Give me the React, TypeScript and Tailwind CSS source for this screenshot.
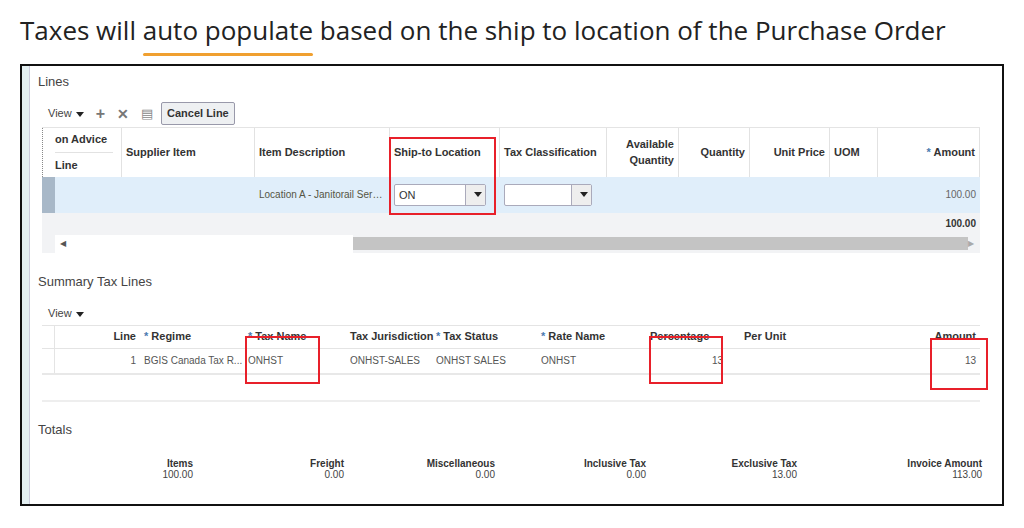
import React from "react";

const H = "font-bold text-[#333] text-[11px]";
const Tri = () => <span className="inline-block ml-1 align-middle w-0 h-0 border-l-[4px] border-r-[4px] border-t-[5px] border-l-transparent border-r-transparent border-t-[#222]" />;

function Select({ value, w }: { value: string; w: string }) {
  return (
    <div className={`flex h-[22px] border border-[#aab] rounded-[2px] bg-white ${w}`}>
      <div className="flex-1 px-1 text-[11px] text-[#333] leading-[20px]">{value}</div>
      <div className="w-[20px] border-l border-[#aab] bg-[#eee] flex items-center justify-center"><Tri /></div>
    </div>
  );
}

export default function App() {
  const lineCols: [string, number, string][] = [
    ["", 67, ""], ["Supplier Item", 133, ""], ["Item Description", 135, ""], ["Ship-to Location", 110, ""],
    ["Tax Classification", 107, ""], ["Available Quantity", 72, "r"], ["Quantity", 71, "r"], ["Unit Price", 80, "r"], ["UOM", 48, ""], ["* Amount", 102, "r"],
  ];
  const totals = [["Items", "100.00"], ["Freight", "0.00"], ["Miscellaneous", "0.00"], ["Inclusive Tax", "0.00"], ["Exclusive Tax", "13.00"], ["Invoice Amount", "113.00"]];
  return (
    <div className="w-[1024px] h-[528px] bg-white relative overflow-hidden" style={{ fontFamily: "'Liberation Sans', Arial, sans-serif" }}>
      <div className="pt-[13px] pl-[20px] text-[26px] text-[#222] leading-[34px]" style={{ fontFamily: "'Open Sans', sans-serif" }}>
        Taxes will <span className="relative">auto populate<span className="absolute left-0 right-0 bottom-[-8px] h-[3px] rounded bg-[#f0a030]" /></span> based on the ship to location of the Purchase Order
      </div>
      <div className="absolute left-[20px] top-[64px] w-[984px] h-[442px] border-2 border-[#111] bg-white flex">
        <div className="w-[8px] bg-[#e4f0f2] border-r border-[#ccd]" />
        <div className="flex-1 pl-[8px] pr-[14px] relative">
          <div className="text-[13px] text-[#444] mt-[6px]">Lines</div>
          <div className="flex items-center gap-3 mt-[11px] ml-[10px] text-[11px] text-[#444] h-[22px]">
            <span>View<Tri /></span>
            <span className="text-[#777] text-[16px] font-bold leading-none">+</span>
            <span className="text-[#777] text-[14px] font-bold leading-none">✕</span>
            <span className="text-[#888] text-[13px] leading-none">▤</span>
            <span className="border border-[#99a] rounded-[2px] bg-[#eef0f2] px-[5px] py-[2px] font-bold text-[#333] -ml-1">Cancel Line</span>
          </div>
          <div className="mt-[2px] ml-[4px] w-[938px]">
            <div className="flex h-[50px] border-t border-[#e4e4e4]">
              <div className="w-[13px] border-l border-dotted border-[#888]" />
              {lineCols.map(([t, w, a], i) => (
                <div key={i} style={{ width: w }} className={`border-r border-[#e2e2e2] px-[4px] flex items-center ${a ? "justify-end text-right" : ""} ${H}`}>
                  {i === 0 ? <div className="flex flex-col w-full -ml-[4px]"><span className="h-[25px] leading-[22px] border-b border-[#e2e2e2]">on Advice</span><span className="leading-[24px]">Line</span></div> : t === "* Amount" ? <span><span className="text-[#4a7ab0]">*</span> Amount</span> : t}
                </div>
              ))}
            </div>
            <div className="flex h-[36px] bg-[#e0eefa] items-center">
              <div className="w-[13px] h-full bg-[#a8b8c8]" />
              <div className="w-[200px]" />
              <div className="w-[135px] px-[4px] text-[10px] text-[#554] truncate">Location A - Janitorail Servi...</div>
              <div className="w-[110px] px-[4px]"><Select value="ON" w="w-[92px]" /></div>
              <div className="w-[107px] px-[4px]"><Select value="" w="w-[88px]" /></div>
              <div className="flex-1 text-right pr-[4px] text-[10px] text-[#666]">100.00</div>
            </div>
            <div className="h-[22px] bg-[#f2f3f5] text-right pr-[4px] text-[10px] font-bold text-[#333] leading-[22px]">100.00</div>
            <div className="h-[18px] bg-[#f2f3f5] flex items-center">
              <div className="w-[13px]" />
              <div className="w-[298px] bg-white h-full flex items-center pl-[5px] text-[8px] text-[#555]">◀</div>
              <div className="flex-1 bg-[#c4c4c4] h-[13px]" />
              <div className="w-[12px] text-[8px] text-[#aaa]">▶</div>
            </div>
          </div>

          <div className="text-[13px] text-[#444] mt-[19px]">Summary Tax Lines</div>
          <div className="mt-[14px] ml-[10px] text-[11px] text-[#444]">View<Tri /></div>
          <div className="mt-[3px] ml-[4px] w-[938px] text-[11px]">
            <div className="flex h-[24px] border-t border-b border-[#e4e4e4] items-center">
              <div className="w-[13px] h-full border-r border-[#e4e4e4]" />
              <div className="w-[89px] text-right pr-[8px] font-bold text-[#333]">Line</div>
              <div className="w-[104px] font-bold text-[#333]"><span className="text-[#4a7ab0]">*</span> Regime</div>
              <div className="w-[102px] font-bold text-[#333]"><span className="text-[#4a7ab0]">*</span> Tax Name</div>
              <div className="w-[86px] font-bold text-[#333]">Tax Jurisdiction</div>
              <div className="w-[105px] font-bold text-[#333]"><span className="text-[#4a7ab0]">*</span> Tax Status</div>
              <div className="w-[109px] font-bold text-[#333]"><span className="text-[#4a7ab0]">*</span> Rate Name</div>
              <div className="w-[94px] font-bold text-[#333]">Percentage</div>
              <div className="flex-1 font-bold text-[#333]">Per Unit</div>
              <div className="w-[60px] text-right pr-[4px] font-bold text-[#333]">Amount</div>
            </div>
            <div className="flex h-[26px] border-b-2 border-[#e8e8e8] items-center text-[10px] text-[#555]">
              <div className="w-[13px] h-full border-r border-[#e4e4e4]" />
              <div className="w-[89px] text-right pr-[8px]">1</div>
              <div className="w-[104px] truncate pr-1">BGIS Canada Tax R...</div>
              <div className="w-[102px]">ONHST</div>
              <div className="w-[86px]">ONHST-SALES</div>
              <div className="w-[105px]">ONHST SALES</div>
              <div className="w-[109px]">ONHST</div>
              <div className="w-[73px] text-right">13</div>
              <div className="flex-1" />
              <div className="w-[60px] text-right pr-[4px]">13</div>
            </div>
            <div className="mt-[25px] border-t-2 border-[#eee]" />
          </div>
          <div className="text-[13px] text-[#444] mt-[18px]">Totals</div>
          <div className="flex mt-[19px] text-[10px] text-[#444] ml-[4px]">
            {totals.map(([l, v], i) => (
              <div key={i} className={`${i === 5 ? "w-[185px]" : "w-[151px]"} text-right leading-[11px]`}>
                <div className="font-bold text-[#333]">{l}</div>
                <div>{v}</div>
              </div>
            ))}
          </div>
        </div>
      </div>
      <div className="absolute left-[389px] top-[137px] w-[107px] h-[78px] border-2 border-[#e8202a]" />
      <div className="absolute left-[245px] top-[336px] w-[75px] h-[48px] border-2 border-[#e8202a]" />
      <div className="absolute left-[649px] top-[336px] w-[74px] h-[48px] border-2 border-[#e8202a]" />
      <div className="absolute left-[930px] top-[338px] w-[58px] h-[52px] border-2 border-[#e8202a]" />
    </div>
  );
}
